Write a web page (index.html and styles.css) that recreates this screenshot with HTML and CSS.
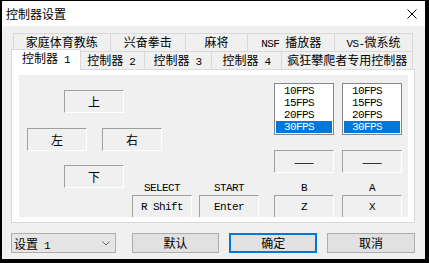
FILE: index.html
```html
<!DOCTYPE html>
<html lang="zh-CN">
<head>
  <meta charset="UTF-8" />
  <meta name="viewport" content="width=device-width, initial-scale=1.0" />
  <title>控制器设置</title>
  <link rel="stylesheet" href="styles.css">
</head>
<body>
  <div class="window">
    <div class="titlebar">
      <span class="title">控制器设置</span>
      <svg class="close" width="10" height="10" viewBox="0 0 10 10"><path d="M0.5 0.5L9.5 9.5M9.5 0.5L0.5 9.5" stroke="#000" stroke-width="1" fill="none"/></svg>
    </div>

    <div class="content">
      <div class="tabs">
        <div class="tab-row">
          <div class="tab w98">家庭体育教练</div>
          <div class="tab w75">兴奋拳击</div>
          <div class="tab w63">麻将</div>
          <div class="tab w87"><span class="mono">NSF </span>播放器</div>
          <div class="tab w78"><span class="mono">VS-</span>微系统</div>
        </div>
        <div class="tab-row">
          <div class="tab w66 active">控制器<span class="mono"> 1</span></div>
          <div class="tab w66">控制器<span class="mono"> 2</span></div>
          <div class="tab w67">控制器<span class="mono"> 3</span></div>
          <div class="tab w71">控制器<span class="mono"> 4</span></div>
          <div class="tab w131">疯狂攀爬者专用控制器</div>
        </div>
      </div>

      <div class="panel">
        <div class="page">
          <div class="field up">上</div>
          <div class="field left">左</div>
          <div class="field right">右</div>
          <div class="field down">下</div>

          <div class="list col-b">
            <div class="mono">10FPS</div>
            <div class="mono">15FPS</div>
            <div class="mono">20FPS</div>
            <div class="mono sel">30FPS</div>
          </div>
          <div class="list col-a">
            <div class="mono">10FPS</div>
            <div class="mono">15FPS</div>
            <div class="mono">20FPS</div>
            <div class="mono sel">30FPS</div>
          </div>

          <div class="field turbo col-b">——</div>
          <div class="field turbo col-a">——</div>

          <div class="label mono col-select">SELECT</div>
          <div class="label mono col-start">START</div>
          <div class="label mono col-b">B</div>
          <div class="label mono col-a">A</div>

          <div class="field key mono col-select">R Shift</div>
          <div class="field key mono col-start">Enter</div>
          <div class="field key mono col-b">Z</div>
          <div class="field key mono col-a">X</div>
        </div>
      </div>

      <div class="actions">
        <div class="combo">
          <span>设置<span class="mono"> 1</span></span>
          <svg width="8" height="5" viewBox="0 0 8 5"><path d="M0.5 0.5L4 4L7.5 0.5" stroke="#606060" fill="none"/></svg>
        </div>
        <div class="btn">默认</div>
        <div class="btn default">确定</div>
        <div class="btn">取消</div>
      </div>
    </div>
  </div>
</body>
</html>
```

FILE: styles.css
```css
* { box-sizing: border-box; }
body { margin: 0; background: #000; font-family: "Noto Sans CJK SC", sans-serif; font-size: 12px; color: #000; }
.mono { font-family: "Liberation Mono", monospace; font-size: 11px; letter-spacing: -0.6px; }

.window { width: 429px; height: 263px; border-style: solid; border-color: #000; border-width: 1px 4px 4px 2px; background: #f0f0f0; }
.titlebar { height: 25px; background: #fff; display: flex; align-items: center; justify-content: space-between; padding: 0 8px 0 4px; }

.content { padding: 7px 10px 0 9px; }

/* two rows of tabs */
.tabs { padding: 0 2px; }
.tab-row { display: flex; height: 18px; }
.tab { height: 18px; line-height: 16px; text-align: center; white-space: nowrap; background: #f0f0f0; border-top: 1px solid #d9d9d9; border-right: 1px solid #d9d9d9; }
.tab:first-child { border-left: 1px solid #d9d9d9; }
.tab.active { position: relative; z-index: 1; height: 21px; margin: -2px -2px -1px; background: #fff; }
.w63 { width: 63px; }
.w66 { width: 66px; }
.w67 { width: 67px; }
.w71 { width: 71px; }
.w75 { width: 75px; }
.w78 { width: 78px; }
.w87 { width: 87px; }
.w98 { width: 98px; }
.w131 { width: 131px; }
.tab.active.w66 { width: 70px; }

.panel { height: 154px; border: 1px solid #d9d9d9; background: #fff; padding: 5px 6px 5px 7px; }
.page {
  height: 142px;
  background: #f0f0f0;
  overflow: hidden;
  display: grid;
  grid-template-columns: 8px 37px 38px 30px 67px 75px 68px 67px;
  grid-template-rows: 8px 7px 38px 22px 15px 17px 13px 22px;
}

.field { width: 60px; height: 23px; display: flex; align-items: center; justify-content: center; border: 1px solid; border-color: #a0a0a0 #fff #fff #a0a0a0; }
.up { grid-column: 3; grid-row: 3; }
.left { grid-column: 2; grid-row: 4; }
.right { grid-column: 4; grid-row: 4; }
.down { grid-column: 3; grid-row: 6; }

.col-select { grid-column: 5; }
.col-start { grid-column: 6; }
.col-b { grid-column: 7; }
.col-a { grid-column: 8; }

.list { grid-row: 2; width: 60px; height: 52px; padding: 1px; border: 1px solid #828790; background: #fff; }
.list div { height: 12px; line-height: 12px; padding-left: 8px; }
.list .sel { background: #0078d7; color: #fff; }

.turbo { grid-row: 5; }
.label { grid-row: 7; width: 60px; text-align: center; line-height: 12px; }
.key { grid-row: 8; }

.actions { display: flex; align-items: center; gap: 10px; margin-top: 10px; }
.combo { width: 105px; height: 20px; margin-right: 6px; display: flex; align-items: center; justify-content: space-between; padding: 0 5px 0 2px; border: 1px solid #adadad; background: #e5e5e5; }
.btn { width: 88px; height: 20px; line-height: 18px; text-align: center; border: 1px solid #adadad; background: #e1e1e1; }
.btn.default { border: 2px solid #0078d7; line-height: 16px; }
```
